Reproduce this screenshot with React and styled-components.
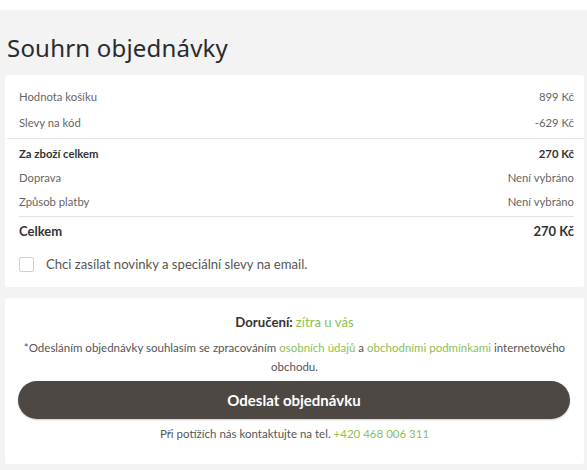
import React from 'react'
import styled, { createGlobalStyle } from 'styled-components'

const GlobalStyle = createGlobalStyle`
  html, body {
    margin: 0;
    padding: 0;
    background: #ffffff;
  }
  body {
    font-family: Lato, "Open Sans", sans-serif;
    color: #333;
  }
`

const Page = styled.div`
  margin-top: 10px;
  background: #f3f3f3;
  padding: 23px 3px 7px 5px;
  width: 587px;
  box-sizing: border-box;
  min-height: 460px;
`
const Title = styled.h1`
  margin: 0 0 12px 2px;
  font-family: "Noto Sans", "Open Sans", sans-serif;
  font-weight: 400;
  font-size: 24px;
  line-height: 30px;
  color: #2b2b2b;
  letter-spacing: 0.2px;
`
const Card = styled.section`
  background: #fff;
  border-radius: 3px;
  padding: ${p => p.$pad || '0'};
`
const Summary = styled.div`
  padding: 8px 0 0 0;
`
const Row = styled.div`
  display: flex;
  justify-content: space-between;
  align-items: center;
  height: ${p => p.$h || 24}px;
  padding: 0 ${p => p.$right || 10}px 0 14px;
  font-size: ${p => (p.$total ? 13 : 11.3)}px;
  font-weight: ${p => (p.$bold ? 700 : 400)};
  color: ${p => (p.$bold ? '#333' : '#666')};
`
const Divider = styled.hr`
  border: 0;
  border-top: 1px solid #e3e3e3;
  margin: ${p => p.$m || '2px 0'};
`
const Newsletter = styled.label`
  display: flex;
  align-items: center;
  gap: 12px;
  padding: 12px 14px 15px 14px;
  font-size: 13.1px;
  line-height: 16px;
  color: #555;
`
const Box = styled.span`
  width: 13px;
  height: 13px;
  border: 1px solid #cfcfcf;
  border-radius: 2px;
  background: #fff;
  flex: none;
`
const Gap = styled.div`
  height: 11px;
`
const Delivery = styled.p`
  margin: 0 0 8px;
  text-align: center;
  font-size: 13.2px;
  line-height: 16px;
  font-weight: 700;
  color: #333;
`
const Green = styled.span`
  color: #8cc152;
  font-weight: 400;
`
const Note = styled.p`
  margin: 0 12px 5px;
  text-align: center;
  font-size: 11.5px;
  line-height: 19px;
  color: #555;
`
const Submit = styled.button`
  display: block;
  width: 552px;
  height: 38px;
  margin: 0 0 0 13px;
  border: 0;
  border-radius: 19px;
  background: #4e4845;
  color: #fff;
  font-family: Lato, sans-serif;
  font-size: 15px;
  font-weight: 700;
  box-shadow: 0 1px 2px rgba(0,0,0,0.2);
  cursor: pointer;
`
const Contact = styled.p`
  margin: 8px 0 0;
  text-align: center;
  font-size: 11.5px;
  line-height: 14px;
  color: #555;
`

export default function App() {
  return (
    <>
      <GlobalStyle />
      <Page>
        <Title>Souhrn objednávky</Title>
        <Card>
          <Summary>
            <Row $h={26}><span>Hodnota košíku</span><span>899 Kč</span></Row>
            <Row $h={26}><span>Slevy na kód</span><span>-629 Kč</span></Row>
            <Divider $m="3px 0 2px 2px" />
            <Row $bold><span>Za zboží celkem</span><span>270 Kč</span></Row>
            <Row><span>Doprava</span><span>Není vybráno</span></Row>
            <Row><span>Způsob platby</span><span>Není vybráno</span></Row>
            <Divider $m="3px 10px 1px 14px" />
            <Row $bold $total $h={26}><span>Celkem</span><span>270 Kč</span></Row>
          </Summary>
          <Newsletter>
            <Box />
            <span>Chci zasílat novinky a speciální slevy na email.</span>
          </Newsletter>
        </Card>
        <Gap />
        <Card $pad="16px 0 23px">
          <Delivery>Doručení: <Green>zítra u vás</Green></Delivery>
          <Note>
            *Odesláním objednávky souhlasím se zpracováním <Green>osobních údajů</Green> a{' '}
            <Green>obchodními podmínkami</Green> internetového obchodu.
          </Note>
          <Submit>Odeslat objednávku</Submit>
          <Contact>Při potížích nás kontaktujte na tel. <Green>+420 468 006 311</Green></Contact>
        </Card>
      </Page>
    </>
  )
}
